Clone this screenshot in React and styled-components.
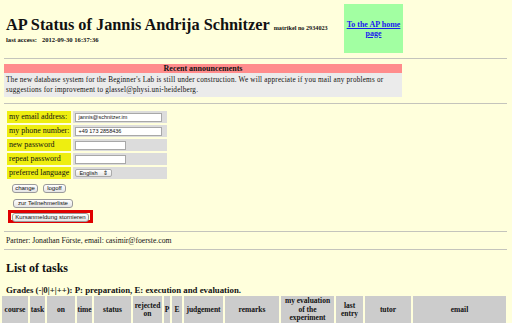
import React from 'react';
import styled, { createGlobalStyle } from 'styled-components';

const serif = '"Liberation Serif", "Times New Roman", serif';
const sans = '"Liberation Sans", Arial, sans-serif';

const GlobalStyle = createGlobalStyle`
	html, body {
		margin: 0;
		padding: 0;
		background: #ffffdc;
	}
	body {
		font-family: ${serif};
		color: #111;
		overflow: hidden;
	}
	table, th, td {
		font-family: ${serif};
		color: #111;
	}
`;

const Page = styled.div`
	padding: 0 5px 0 4px;
	height: 323px;
	overflow: hidden;
`;

const Header = styled.div`
	display: flex;
	align-items: flex-start;
	height: 58px;
`;

const TitleCell = styled.div`
	width: 340px;
	padding: 16px 0 0 2px;
	box-sizing: border-box;
`;

const Title = styled.h1`
	margin: 0;
	font-size: 16.3px;
	font-weight: bold;
	line-height: 17px;
	white-space: nowrap;
`;

const Tiny = styled.span`
	font-size: 6.2px;
	font-weight: bold;
	margin-left: ${(p) => p.$gap || 0}px;
`;

const Access = styled.div`
	font-size: 6.6px;
	font-weight: bold;
	line-height: 7px;
`;

const HomeBox = styled.div`
	margin-top: 4px;
	width: 59px;
	height: 49px;
	background: #a2ffa2;
	display: flex;
	align-items: center;
	justify-content: center;
	text-align: center;
`;

const HomeLink = styled.a`
	color: #1a1aee;
	font-weight: bold;
	font-size: 8px;
	line-height: 9px;
	text-decoration: underline;
`;

const Rule = styled.div`
	height: 1px;
	background: #c4c4bc;
	margin: ${(p) => p.$top || 0}px 0 ${(p) => p.$bottom || 0}px;
`;

const News = styled.div`
	width: 398px;
	margin: 5px 0 6px;
`;

const NewsHead = styled.div`
	height: 9px;
	background: #ff8c8c;
	font-size: 8px;
	font-weight: bold;
	line-height: 9px;
	text-align: center;
`;

const NewsBody = styled.div`
	background: #ebebeb;
	padding: 2px 2px;
	font-size: 7.2px;
	letter-spacing: 0.2px;
	line-height: 10px;
	white-space: nowrap;
	overflow: hidden;
`;

const FormTable = styled.table`
	border-spacing: 2px;
	margin: 5px 0 0 1px;
`;

const LabelCell = styled.td`
	background: #eeee10;
	height: 12px;
	padding: 0 2px 0 2px;
	font-size: 8px;
	line-height: 12px;
	white-space: nowrap;
`;

const FieldCell = styled.td`
	background: #dcdcdc;
	width: 92px;
	height: 12px;
	padding: 0 0 0 2px;
	vertical-align: middle;
`;

const Field = styled.div`
	width: ${(p) => p.$w}px;
	height: 9px;
	box-sizing: border-box;
	background: #fff;
	border: 1px solid #a8a8a8;
	font-family: ${sans};
	font-size: 5.5px;
	line-height: 7px;
	padding-left: 2px;
`;

const Select = styled.div`
	width: 37px;
	height: 8px;
	box-sizing: border-box;
	border: 1px solid #aaa;
	border-radius: 2px;
	background: linear-gradient(#fff, #e6e6e6);
	font-family: ${sans};
	font-size: 5.5px;
	line-height: 6px;
	padding: 0 3px;
	display: flex;
	justify-content: space-between;
`;

const ButtonRow = styled.div`
	display: flex;
	gap: 5px;
	margin: ${(p) => p.$top || 0}px 0 0 ${(p) => p.$left || 8}px;
`;

const Button = styled.div`
	width: ${(p) => p.$w}px;
	height: 9px;
	box-sizing: border-box;
	border: 1px solid #9a9a9a;
	border-radius: 3px;
	background: linear-gradient(#ffffff, #e4e4e4);
	font-family: ${sans};
	font-size: 6px;
	line-height: 7px;
	text-align: center;
	white-space: nowrap;
	overflow: hidden;
`;

const CancelFrame = styled.div`
	width: 85px;
	height: 13px;
	box-sizing: border-box;
	border: 3px solid #e00000;
	margin: 2px 0 0 4px;
	padding: 0 1px;
`;

const Partner = styled.div`
	font-size: 7.7px;
	line-height: 17px;
	padding-left: 2px;
`;

const ListTitle = styled.h2`
	margin: 11px 0 0 2px;
	font-size: 12px;
	line-height: 14px;
`;

const Grades = styled.div`
	margin: 11px 0 0 2px;
	font-size: 8.8px;
	font-weight: bold;
	line-height: 9px;
`;

const TaskTable = styled.table`
	table-layout: fixed;
	width: 508px;
	border-spacing: 2px;
	margin: -1px 0 0 -4px;
`;

const HeadCell = styled.th`
	width: ${(p) => p.$w}px;
	background: #cccccc;
	font-size: 7.5px;
	line-height: 8.5px;
	height: 28px;
	padding: 0;
	text-align: center;
	vertical-align: middle;
`;

const columns = [
	['course', 26],
	['task', 15],
	['on', 28],
	['time', 15],
	['status', 37],
	['rejected on', 29],
	['P', 6],
	['E', 10],
	['judgement', 39],
	['remarks', 54],
	['my evaluation of the experiment', 53],
	['last entry', 27],
	['tutor', 46],
	['email', 93],
];

const formRows = [
	['my email address:', <Field $w={87}>jannis@schnitzer.im</Field>],
	['my phone number:', <Field $w={87}>+49 173 2858436</Field>],
	['new password', <Field $w={51} />],
	['repeat password', <Field $w={51} />],
	[
		'preferred language',
		<Select>
			<span>English</span>
			<span>⇕</span>
		</Select>,
	],
];

export default function App() {
	return (
		<>
			<GlobalStyle />
			<Page>
				<Header>
					<TitleCell>
						<Title>
							AP Status of Jannis Andrija Schnitzer<Tiny $gap={4}>matrikel no 2934023</Tiny>
						</Title>
						<Access>last access:&nbsp;&nbsp; 2012-09-30 16:37:36</Access>
					</TitleCell>
					<HomeBox>
						<HomeLink href="#">
							To the AP home
							<br />
							page
						</HomeLink>
					</HomeBox>
				</Header>
				<Rule />

				<News>
					<NewsHead>Recent announcements</NewsHead>
					<NewsBody>
						The new database system for the Beginner's Lab is still under construction. We will appreciate if
						you mail any problems or
						<br />
						suggestions for improvement to glassel@physi.uni-heidelberg.
					</NewsBody>
				</News>
				<Rule />

				<FormTable>
					<tbody>
						{formRows.map(([label, field]) => (
							<tr key={label}>
								<LabelCell>{label}</LabelCell>
								<FieldCell>{field}</FieldCell>
							</tr>
						))}
					</tbody>
				</FormTable>
				<ButtonRow $top={3}>
					<Button $w={26}>change</Button>
					<Button $w={23}>logoff</Button>
				</ButtonRow>
				<ButtonRow $top={6} $left={9}>
					<Button $w={60}>zur Teilnehmerliste</Button>
				</ButtonRow>
				<CancelFrame>
					<Button $w={77}>Kursanmeldung stornieren</Button>
				</CancelFrame>

				<Rule $top={8} />
				<Partner>Partner: Jonathan Förste, email: casimir@foerste.com</Partner>
				<Rule />

				<ListTitle>List of tasks</ListTitle>
				<Grades>Grades (-|0|+|++): P: preparation, E: execution and evaluation.</Grades>
				<TaskTable>
					<thead>
						<tr>
							{columns.map(([name, w]) => (
								<HeadCell key={name} $w={w}>
									{name}
								</HeadCell>
							))}
						</tr>
					</thead>
				</TaskTable>
			</Page>
		</>
	);
}
